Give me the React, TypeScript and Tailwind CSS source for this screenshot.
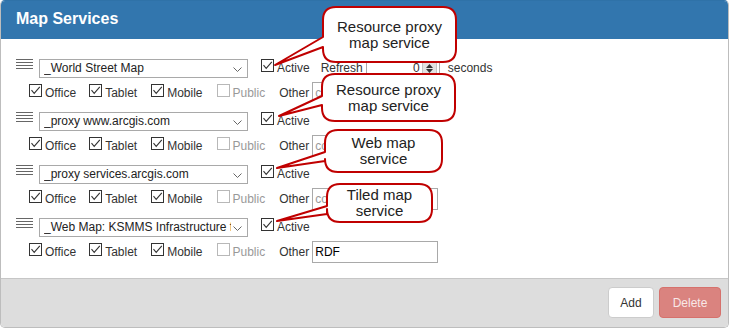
import React from 'react';

interface Service {
  name: string;
  other: string;
  refresh?: boolean;
}

interface Callout {
  box: [number, number, number, number]; // x1, y1, x2, y2 (outer edge)
  tail: [number, number]; // base top / bottom on left edge
  tip: [number, number];
  lines: string[];
}

const services: Service[] = [
  { name: '_World Street Map', other: '', refresh: true },
  { name: '_proxy www.arcgis.com', other: '' },
  { name: '_proxy services.arcgis.com', other: '' },
  { name: '_Web Map: KSMMS Infrastructure for Mobile', other: 'RDF' },
];

const callouts: Callout[] = [
  { box: [322, 6, 457, 63], tail: [37, 47], tip: [275, 65], lines: ['Resource proxy', 'map service'] },
  { box: [321, 73, 456, 122], tail: [96, 105], tip: [279, 116], lines: ['Resource proxy', 'map service'] },
  { box: [324, 129, 443, 173], tail: [152, 161], tip: [277, 168], lines: ['Web map', 'service'] },
  { box: [326, 183, 433, 223], tail: [206, 214], tip: [277, 221], lines: ['Tiled map', 'service'] },
];

// rounded box with a wedge on the left side, stroke centred 1px inside the outer edge
const bubblePath = (c: Callout, r = 13) => {
  const [ox1, oy1, ox2, oy2] = c.box;
  const x1 = ox1 + 1;
  const y1 = oy1 + 1;
  const x2 = ox2 - 1;
  const y2 = oy2 - 1;
  const [a, b] = c.tail;
  const [tx, ty] = c.tip;
  return `M${x1 + r} ${y1} H${x2 - r} Q${x2} ${y1} ${x2} ${y1 + r} V${y2 - r} Q${x2} ${y2} ${x2 - r} ${y2} H${x1 + r} Q${x1} ${y2} ${x1} ${y2 - r} V${b} L${tx} ${ty} L${x1} ${a} V${y1 + r} Q${x1} ${y1} ${x1 + r} ${y1} Z`;
};

const Check: React.FC<{ checked?: boolean; disabled?: boolean; className?: string }> = ({
  checked = true,
  disabled = false,
  className = '',
}) => (
  <span
    className={`inline-flex w-[13px] h-[13px] shrink-0 border bg-white ${
      disabled ? 'border-[#b8b8b8]' : 'border-[#333]'
    } ${className}`}
  >
    {checked && (
      <svg viewBox="0 0 11 11" className="w-[11px] h-[11px]">
        <path d="M1.5 5.2 L4.2 8.4 L9.8 1.8" fill="none" stroke="#333" strokeWidth="1.1" />
      </svg>
    )}
  </span>
);

const DragHandle = () => (
  <div className="ml-[15px] w-[17px] flex flex-col gap-[2px] shrink-0">
    <div className="h-px bg-[#666]" />
    <div className="h-px bg-[#666]" />
    <div className="h-px bg-[#666]" />
    <div className="h-px bg-[#666]" />
  </div>
);

const ServiceRow: React.FC<{ svc: Service }> = ({ svc }) => (
  <div className="flex flex-col">
    <div className="flex items-start h-[19px] leading-[19px]">
      <DragHandle />
      <div className="ml-[6px] w-[209px] h-[19px] border border-[#a9a9a9] flex items-center pl-[4px] pr-[5px] leading-[17px] text-[#222]">
        <span className="w-[187px] overflow-hidden whitespace-nowrap">{svc.name}</span>
        <svg viewBox="0 0 9 5" className="ml-auto w-[9px] h-[5px] mt-[2px]">
          <path d="M0.5 0.5 L4.5 4.5 L8.5 0.5" fill="none" stroke="#666" strokeWidth="1" />
        </svg>
      </div>
      <Check className="ml-[13px]" />
      <span className="ml-[3px]">Active</span>
      {svc.refresh && (
        <>
          <span className="ml-[11px]">Refresh</span>
          <div className="ml-[3px] w-[74px] h-[19px] border border-[#a9a9a9] flex items-center justify-end pr-[2px]">
            <span className="mr-[2px] leading-[17px]">0</span>
            <div className="w-[15px] h-[15px] bg-[#e2e2e2] border border-[#c4c4c4] flex flex-col items-center justify-between py-[2px]">
              <svg viewBox="0 0 7 4" className="w-[7px] h-[4px]">
                <path d="M0 4 L3.5 0 L7 4 Z" fill="#333" />
              </svg>
              <svg viewBox="0 0 7 4" className="w-[7px] h-[4px]">
                <path d="M0 0 L3.5 4 L7 0 Z" fill="#333" />
              </svg>
            </div>
          </div>
          <span className="ml-[8px]">seconds</span>
        </>
      )}
    </div>
    <div className="mt-[4px] h-[22px] flex items-center pl-[28px] leading-[22px]">
      <Check className="self-start mt-[2px]" />
      <span className="ml-[3px]">Office</span>
      <Check className="self-start mt-[2px] ml-[13px]" />
      <span className="ml-[3px]">Tablet</span>
      <Check className="self-start mt-[2px] ml-[14px]" />
      <span className="ml-[3px]">Mobile</span>
      <Check checked={false} disabled className="self-start mt-[2px] ml-[14px]" />
      <span className="ml-[3px] text-[#999]">Public</span>
      <span className="ml-[14px]">Other</span>
      <div className="ml-[3px] w-[126px] h-[22px] border border-[#a9a9a9] flex items-center px-[2px] leading-[20px] overflow-hidden whitespace-nowrap">
        {svc.other ? (
          <span className="text-black">{svc.other}</span>
        ) : (
          <span className="text-[#999]">comma separated</span>
        )}
      </div>
    </div>
  </div>
);

const App: React.FC = () => {
  return (
    <div className="relative w-[729px] h-[328px] bg-white font-['Liberation_Sans',Arial,sans-serif] text-[12px] text-[#333]">
      <div className="w-full h-full flex flex-col border border-[#bdbdbd] border-t-[#2f72a8] rounded-[5px] overflow-hidden">
        {/* Header */}
        <div className="h-[38px] shrink-0 bg-[#3276ae] pl-[15px] leading-[35px] text-[16px] font-bold text-white">
          Map Services
        </div>

        {/* Service list */}
        <div className="h-[239px] shrink-0 pt-[20px] flex flex-col gap-[8px]">
          {services.map((svc) => (
            <ServiceRow key={svc.name} svc={svc} />
          ))}
        </div>

        {/* Footer */}
        <div className="flex-1 border-t border-[#c6c6c6] bg-[#dddddd] flex justify-end items-start pt-[8px] pr-[7px] gap-[5px]">
          <button className="w-[46px] h-[31px] bg-white border border-[#cccccc] rounded-[4px] text-[#333]">
            Add
          </button>
          <button className="w-[62px] h-[31px] bg-[#da837f] border border-[#d6716c] rounded-[4px] text-[#f8e8e7]">
            Delete
          </button>
        </div>
      </div>

      {/* Annotation callouts */}
      <svg className="absolute left-0 top-0 w-[729px] h-[328px] pointer-events-none" viewBox="0 0 729 328">
        {callouts.map((c, i) => (
          <path key={i} d={bubblePath(c)} fill="white" stroke="#c00000" strokeWidth="2" strokeLinejoin="round" />
        ))}
      </svg>
      {callouts.map((c, i) => (
        <div
          key={i}
          className="absolute flex flex-col items-center justify-center text-[15px] leading-[16px] text-[#222] text-center"
          style={{ left: c.box[0], top: c.box[1], width: c.box[2] - c.box[0], height: c.box[3] - c.box[1] }}
        >
          {c.lines.map((l) => (
            <span key={l}>{l}</span>
          ))}
        </div>
      ))}
    </div>
  );
};

export default App;
